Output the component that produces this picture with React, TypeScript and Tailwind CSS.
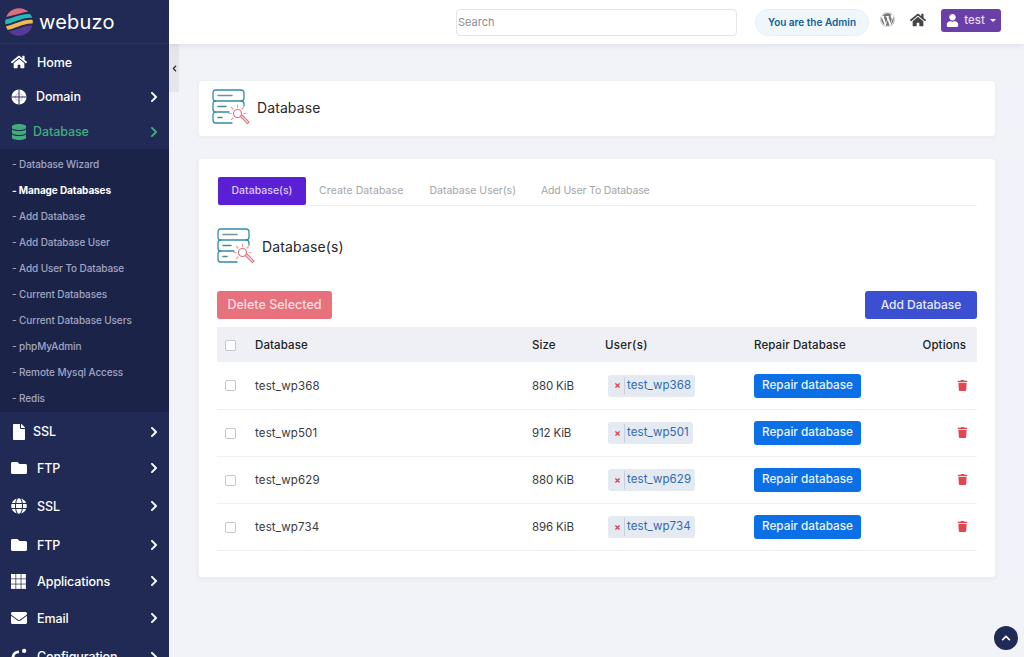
import React from "react";
import { FaHome, FaDatabase, FaFile, FaFolder, FaGlobe, FaEnvelope, FaChevronRight, FaChevronLeft, FaChevronUp, FaWordpress, FaUser, FaTrash, FaTimes } from "react-icons/fa";

function DbIcon({ className }: { className?: string }) {
  return (
    <svg viewBox="0 0 38 36" className={className} fill="none" strokeLinecap="round" strokeLinejoin="round">
      <g stroke="#2f8fa3" strokeWidth="1.300">
        <path d="M3.500 1H29C31 1 32 2 32 4V9C32 11 31 12 29 12H3.500C2 12 1 11 1 9V4C1 2 2 1 3.500 1Z" />
        <path d="M3.500 12C2 12 1 13 1 15V20C1 22 2 23 3.500 23H17" />
        <path d="M29 12C31 12 32 13 32 15V17" />
        <path d="M3.500 23C2 23 1 24 1 26V31C1 33 2 34 3.500 34H20" />
        <path d="M6 6.500H20" stroke="#6f929c" strokeWidth="1.500" />
        <path d="M6 17.500H14" stroke="#4f8494" strokeWidth="1.500" />
        <path d="M6 28.500H10" stroke="#4f8494" strokeWidth="1.500" />
      </g>
      <g stroke="#d9767f" strokeWidth="1.200">
        <circle cx="25.500" cy="24.500" r="4" />
        <path d="M28.500 27.500L35.500 34.700L37 33.200L30 26" />
        <path d="M25.500 16V18.500M19.500 18.500L21 20M17 24.500H19M19.500 30.500L21 29M31.500 18.500L30 20M34 24.500H32" strokeDasharray="1.200 0.600" stroke="#e0a0a0" />
      </g>
    </svg>
  );
}

function Logo() {
  return (
    <svg viewBox="0 0 28 28" className="w-[28px] h-[28px] shrink-0">
      <defs>
        <clipPath id="logo-clip"><circle cx="14" cy="14" r="13.800" /></clipPath>
      </defs>
      <g clipPath="url(#logo-clip)">
        <path d="M0 0H28V4C21 2.500 14 6 3 8.500L0 9Z" fill="#d9707c" />
        <path d="M0 11.500C9 10 18 4 28 6.500V10C19 8.500 10 14.500 0 16.500Z" fill="#27b8ba" />
        <path d="M0 18.500C10 16.500 19 10.500 28 12V15.500C19 14.500 10 21 1.500 22Z" fill="#f1b94e" />
        <path d="M3 23.500C11 22.500 20 16.500 28 17.500V28H3Z" fill="#563a98" />
      </g>
    </svg>
  );
}

function DomainIcon() {
  return (
    <svg viewBox="0 0 16 16" className="w-[16px] h-[16px]">
      <circle cx="8" cy="8" r="7.500" fill="#ffffff" />
      <circle cx="8" cy="8" r="3.600" fill="none" stroke="#8d93ad" strokeWidth="0.500" />
      <path d="M8 .5V15.500M.5 8H15.500" stroke="#2a3159" strokeWidth="1" />
    </svg>
  );
}

function GridIcon() {
  const cells = [0, 1, 2, 3, 4, 5, 6, 7, 8];
  return (
    <svg viewBox="0 0 15 15" className="w-[15px] h-[15px]" fill="#ffffff">
      {cells.map((c) => (
        <rect key={c} x={(c % 3) * 5.200} y={Math.floor(c / 3) * 5.200} width="4.500" height="4.500" />
      ))}
    </svg>
  );
}

function ConfigIcon() {
  return (
    <svg viewBox="0 0 18 18" className="w-[18px] h-[18px]" fill="none">
      <path d="M9.500 3.500A6 6 0 1 0 15 11" stroke="#ffffff" strokeWidth="3" />
      <circle cx="15" cy="2.500" r="2.300" fill="#ffffff" />
    </svg>
  );
}

const subItems = ["Database Wizard", "Manage Databases", "Add Database", "Add Database User", "Add User To Database", "Current Databases", "Current Database Users", "phpMyAdmin", "Remote Mysql Access", "Redis"];

function NavItem({ icon, label, h, textX, arrow = true, green = false }: { icon: React.ReactNode; label: string; h: string; textX: string; arrow?: boolean; green?: boolean }) {
  return (
    <div className={`${h} flex items-center pl-[10px] pr-[9px] shrink-0 ${green ? "text-[#41ad7c]" : "text-white"}`}>
      <span className="w-[17px] flex justify-center text-[16px] shrink-0">{icon}</span>
      <span className={`${textX} text-[12.500px] font-medium tracking-[-0.1px] grow`}>{label}</span>
      {arrow && <FaChevronRight className="text-[12px]" />}
    </div>
  );
}

const rows = [
  { name: "test_wp368", size: "880 KiB" },
  { name: "test_wp501", size: "912 KiB" },
  { name: "test_wp629", size: "880 KiB" },
  { name: "test_wp734", size: "896 KiB" },
];

function Check() {
  return <span className="block w-[11px] h-[11px] border border-[#c4c8cf] rounded-[2px] bg-white" />;
}

export default function App() {
  return (
    <div className="w-[1024px] h-[657px] overflow-hidden flex bg-[#f2f3f8] font-['Inter','Noto_Sans',sans-serif] text-[#222]">
      <aside className="w-[169px] h-full shrink-0 overflow-hidden bg-[#212a54] flex flex-col">
        <div className="h-[44px] shrink-0 flex items-center gap-[6px] pl-[5px] border-b border-[#2d3663]">
          <Logo />
          <span className="text-[20px] leading-none text-white tracking-[0.2px]">webuzo</span>
        </div>
        <NavItem h="h-[36px]" textX="ml-[10px] mt-[2px]" icon={<FaHome />} label="Home" arrow={false} />
        <NavItem h="h-[34px]" textX="ml-[9px]" icon={<DomainIcon />} label="Domain" />
        <NavItem h="h-[35px]" textX="ml-[6px] mt-[2px]" icon={<FaDatabase />} label="Database" green />
        <div className="h-[263px] shrink-0 bg-[#1c2349] pt-[2.500px]">
          {subItems.map((s) => {
            const on = s === "Manage Databases";
            return (
              <div key={s} className={`h-[26px] flex items-center pl-[12px] text-[10px] tracking-[-0.1px] ${on ? "text-white font-bold" : "text-[#a0a5c2] font-medium"}`}>
                - {s}
              </div>
            );
          })}
        </div>
        <NavItem h="h-[39px]" textX="ml-[6px] mt-[1px]" icon={<FaFile />} label="SSL" />
        <NavItem h="h-[33px]" textX="ml-[10px] mt-[4px]" icon={<FaFolder />} label="FTP" />
        <NavItem h="h-[44px]" textX="ml-[10px] mt-[2px]" icon={<FaGlobe />} label="SSL" />
        <NavItem h="h-[33px]" textX="ml-[10px] mt-[4px]" icon={<FaFolder />} label="FTP" />
        <NavItem h="h-[40px]" textX="ml-[10px] mt-[2px]" icon={<GridIcon />} label="Applications" />
        <NavItem h="h-[34px]" textX="ml-[10px] mt-[2px]" icon={<FaEnvelope />} label="Email" />
        <NavItem h="h-[44px]" textX="ml-[10px]" icon={<ConfigIcon />} label="Configuration" />
      </aside>

      <div className="grow min-w-0 relative flex flex-col">
        <header className="h-[44px] shrink-0 bg-white shadow-[0_1px_6px_rgba(60,70,110,0.12)] flex items-center pl-[287px] z-10">
          <input placeholder="Search" className="w-[281px] h-[27px] border border-[#e3e5ea] rounded-[4px] bg-white px-[1px] text-[11px] placeholder:text-[#8a8f98] outline-none" />
          <span className="ml-[18px] w-[114px] h-[27px] rounded-full bg-[#eff7fd] border border-[#e4f0f8] text-[#0f5e97] text-[10px] font-semibold flex items-center justify-center">You are the Admin</span>
          <FaWordpress className="ml-[11px] mb-[5px] text-[15px] text-[#777]" />
          <FaHome className="ml-[15px] mb-[5px] text-[16px] text-[#444]" />
          <button className="ml-[15px] mb-[3px] w-[60px] h-[23px] rounded-[3px] bg-[#6a3fa8] text-[#e4daf3] text-[11.500px] font-medium flex items-center justify-center gap-[5px]">
            <FaUser className="text-[13px] text-white" />
            test
            <span className="w-0 h-0 border-x-[3px] border-x-transparent border-t-[3px] border-t-white" />
          </button>
        </header>

        <div className="absolute left-0 top-[44px] w-[10px] h-[48px] bg-[#e6e6ea] flex items-center justify-center">
          <FaChevronLeft className="text-[7px] text-[#222]" />
        </div>

        <main className="grow pt-[36px] pl-[29px] pr-[28px]">
          <section className="h-[57px] bg-white rounded-[4px] border border-[#eef0f4] shadow-[0_1px_3px_rgba(60,70,110,0.05)] flex items-center pl-[13px]">
            <DbIcon className="w-[38px] h-[36px] mb-[4px]" />
            <h1 className="ml-[7px] mb-[3px] text-[14px] font-normal text-[#2a2a2e] tracking-[0.1px]">Database</h1>
          </section>

          <section className="mt-[21px] h-[420px] bg-white rounded-[4px] border border-[#eef0f4] shadow-[0_1px_4px_rgba(60,70,110,0.06)] px-[18px] pt-[18px]">
            <nav className="flex border-b border-[#eceef2] h-[29px] ml-[1px] text-[10.500px]">
              <span className="h-[28px] w-[88px] flex items-center justify-center rounded-[2px] bg-[#5b1fd6] text-[#d9cdf7] font-medium">Database(s)</span>
              <span className="h-[28px] pl-[13px] pr-[13px] flex items-center text-[#a3a5ab] tracking-[0.1px]">Create Database</span>
              <span className="h-[28px] pl-[13px] pr-[13px] flex items-center text-[#a3a5ab]">Database User(s)</span>
              <span className="h-[28px] pl-[12px] pr-[13px] flex items-center text-[#a3a5ab] tracking-[-0.15px]">Add User To Database</span>
            </nav>

            <div className="mt-[22px] h-[36px] flex items-center">
              <DbIcon className="w-[38px] h-[36px]" />
              <h2 className="ml-[7px] text-[14px] font-normal tracking-[0.15px] text-[#26262a]">Database(s)</h2>
            </div>

            <div className="mt-[27px] flex justify-between">
              <button className="w-[115px] h-[28px] rounded-[3px] bg-[#e7727e] text-[#fbdfe2] text-[12.500px] font-medium">Delete Selected</button>
              <button className="w-[112px] h-[28px] rounded-[3px] bg-[#3a4fd2] text-[#e6e9fb] text-[12px] font-medium">Add Database</button>
            </div>

            <table className="mt-[8px] w-full table-fixed border-collapse text-[11.500px]">
              <colgroup>
                <col className="w-[38px]" />
                <col className="w-[277px]" />
                <col className="w-[73px]" />
                <col className="w-[149px]" />
                <col />
                <col className="w-[60px]" />
              </colgroup>
              <thead>
                <tr className="h-[35px] bg-[#eef0f6] text-left text-[#222]">
                  <th className="pl-[8px] pt-[2px] font-medium"><Check /></th>
                  <th className="pt-[2px] font-medium tracking-[0.1px]">Database</th>
                  <th className="pt-[2px] font-medium tracking-[0.1px]">Size</th>
                  <th className="pt-[2px] font-medium tracking-[0.3px]">User(s)</th>
                  <th colSpan={2} className="pt-[2px] font-medium tracking-[0.1px] pr-[11px]">
                    <div className="flex justify-between"><span>Repair Database</span><span>Options</span></div>
                  </th>
                </tr>
              </thead>
              <tbody>
                {rows.map((r) => (
                  <tr key={r.name} className="h-[47px] border-b border-[#eff0f3] text-[#3a3a3e]">
                    <td className="pl-[8px] pt-[1px]"><Check /></td>
                    <td className="pt-[2px] tracking-[0.15px]">{r.name}</td>
                    <td className="pt-[2px] tracking-[-0.15px]">{r.size}</td>
                    <td className="pl-[3px] pt-[1px]">
                      <span className="inline-flex items-center h-[22px] rounded-[3px] bg-[#e4e9f2] pl-[6px] pr-[4px] text-[#2f6cae]">
                        <FaTimes className="text-[7px] text-[#d8434f]" />
                        <span className="ml-[3px] pl-[2px] border-l border-[#c6cedc] tracking-[0.1px]">{r.name}</span>
                      </span>
                    </td>
                    <td className="pt-[1px]">
                      <button className="w-[107px] h-[24px] rounded-[3px] bg-[#0b6fe6] text-[#eaf3ff] text-[11.750px] font-medium">Repair database</button>
                    </td>
                    <td className="pr-[9px]"><FaTrash className="ml-auto text-[11px] text-[#e2474f]" /></td>
                  </tr>
                ))}
              </tbody>
            </table>
          </section>
        </main>

        <button className="absolute right-[6px] bottom-[7px] w-[24px] h-[24px] rounded-full bg-[#1f2a55] flex items-center justify-center">
          <FaChevronUp className="text-[10px] text-white" />
        </button>
      </div>
    </div>
  );
}
